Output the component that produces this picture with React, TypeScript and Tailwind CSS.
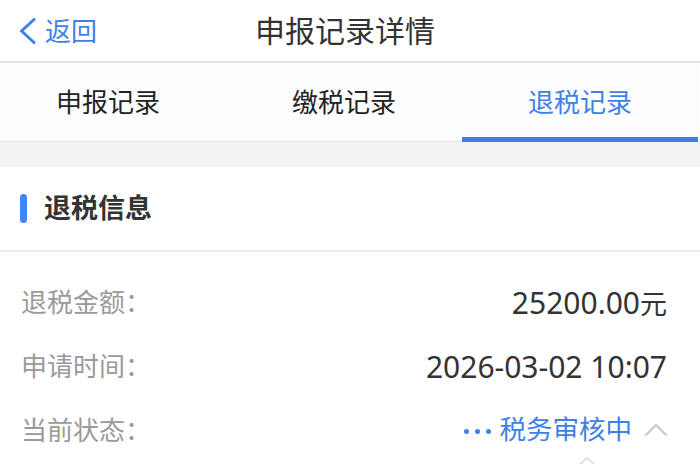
import React from "react";

const BLUE = "text-[#3f7fe6]";

const App = () => {
  const tabs = ["申报记录", "缴税记录", "退税记录"];
  const active = 2;

  const rows = [
    { label: "退税金额：", value: "25200.00", unit: "元" },
    { label: "申请时间：", value: "2026-03-02 10:07", unit: "" },
  ];

  return (
    <div
      className="relative w-[700px] h-[464px] overflow-hidden bg-white"
      style={{ fontFamily: '"Noto Sans", "Noto Sans CJK SC", sans-serif' }}
    >
      {/* Header */}
      <div className="grid grid-cols-[1fr_auto_1fr] items-center h-[63px] pr-[10px] border-b-2 border-[#e3e3e3]">
        <button className={`flex items-center gap-[9px] pl-[19px] ${BLUE}`}>
          <svg width="17" height="26" viewBox="0 0 17 26" fill="none">
            <polyline
              points="15,1.5 2.5,13 15,24.5"
              stroke="#3f7fe6"
              strokeWidth="3"
              strokeLinecap="round"
              strokeLinejoin="round"
            />
          </svg>
          <span className="text-[26px] leading-none">返回</span>
        </button>
        <h1 className="text-[30px] leading-none text-[#333]">申报记录详情</h1>
        <div />
      </div>

      {/* Tabs */}
      <div className="ml-[-10px] w-[708px] grid grid-cols-3 h-[79px] bg-[#fdfdfd]">
        {tabs.map((t, i) => (
          <div
            key={t}
            className={`flex items-center justify-center text-[26px] ${
              i === active
                ? "text-[#3f7fe6] border-b-[5px] border-[#3f7fe6] pt-[5px]"
                : "text-[#222] border-b border-[#e6e6e6] pt-[1px]"
            }`}
          >
            {t}
          </div>
        ))}
      </div>

      {/* Gray band */}
      <div className="h-[25px] bg-[#f2f3f5]" />

      {/* Section header */}
      <div className="flex items-center gap-[17px] h-[85px] pl-[20px] border-b-2 border-[#ececec]">
        <div className="w-[7px] h-[29px] rounded-full bg-[#3f86f5]" />
        <span className="text-[27px] font-bold text-[#333]">退税信息</span>
      </div>

      {/* Rows */}
      <div className="pt-[18px]">
        {rows.map((r) => (
          <div key={r.label} className="flex items-center justify-between h-[64px] pl-[21px] pr-[33px]">
            <span className="text-[26px] text-[#9a9a9a]">{r.label}</span>
            <span className="text-[30px] text-[#333]">
              {r.value}
              {r.unit && <span className="text-[27px]">{r.unit}</span>}
            </span>
          </div>
        ))}
        <div className="flex items-center justify-between h-[64px] pl-[21px] pr-[32px]">
          <span className="text-[26px] text-[#9a9a9a]">当前状态：</span>
          <div className="flex items-center">
            <div className="flex items-center gap-[6px] mr-[9px] pt-[2px]">
              <span className="w-[5px] h-[5px] rounded-full bg-[#3f7fe6]" />
              <span className="w-[5px] h-[5px] rounded-full bg-[#3f7fe6]" />
              <span className="w-[5px] h-[5px] rounded-full bg-[#3f7fe6]" />
            </div>
            <span className={`text-[26.5px] ${BLUE}`}>税务审核中</span>
            <svg width="24" height="14" viewBox="0 0 24 14" fill="none" className="ml-[12px]">
              <polyline points="1.5,12.5 12,2 22.5,12.5" stroke="#c8c8c8" strokeWidth="2" />
            </svg>
          </div>
        </div>
      </div>

      {/* popover caret peeking at bottom */}
      <svg width="18" height="8" viewBox="0 0 18 8" fill="none" className="absolute left-[578px] top-[457px]">
        <polyline points="1,8 9,1 17,8" stroke="#d6d6d6" strokeWidth="1.5" />
      </svg>
    </div>
  );
};

export default App;
